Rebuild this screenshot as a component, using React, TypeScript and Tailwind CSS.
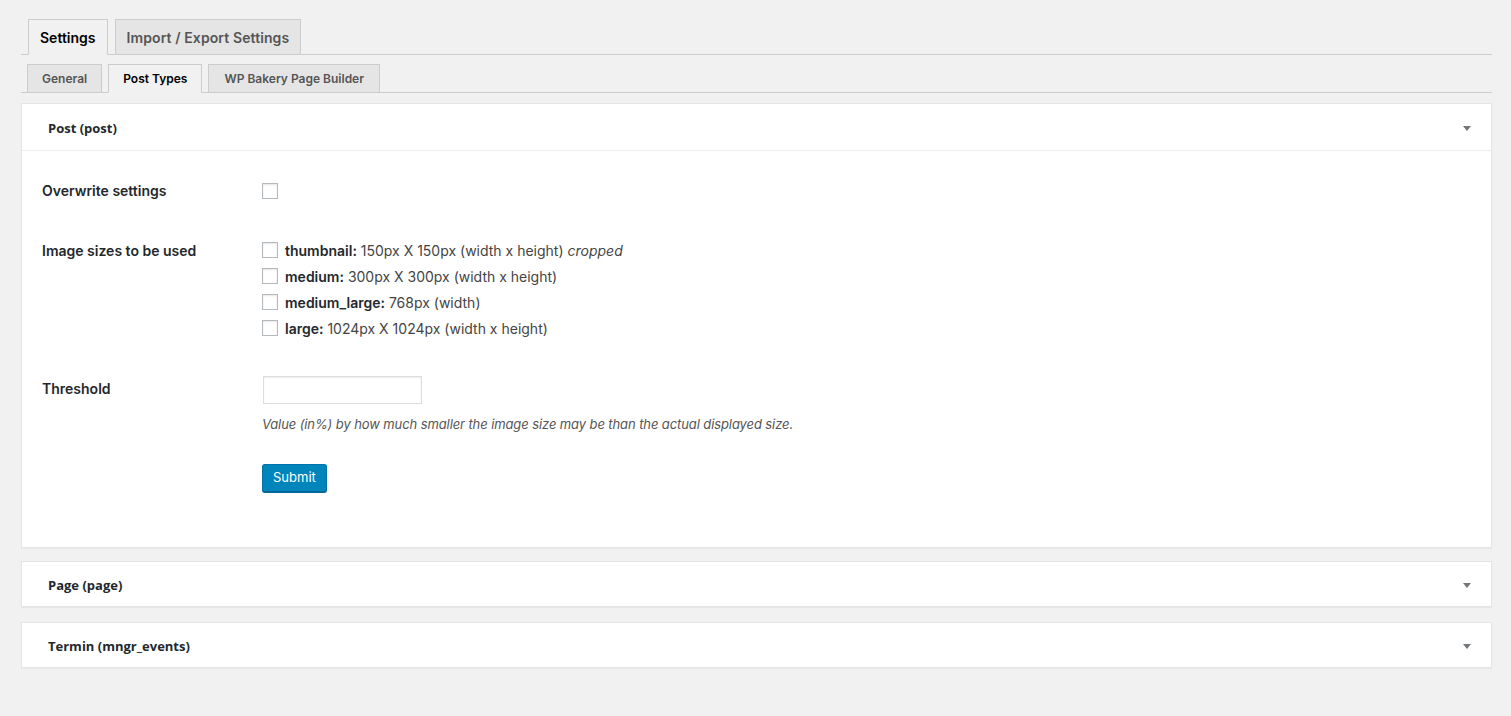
import React from 'react';

const sans = "font-['Inter','Liberation_Sans',sans-serif]";
const head = "font-['Open_Sans','Liberation_Sans',sans-serif]";

function Arrow() {
  return (
    <svg width="10" height="8" viewBox="0 0 10 8" className="text-[#72777c]">
      <path d="M1 1h8L5 6z" fill="currentColor" />
    </svg>
  );
}

function Checkbox() {
  return (
    <span className="inline-block w-4 h-4 shrink-0 bg-white border border-[#b4b9be] shadow-[inset_0_1px_2px_rgba(0,0,0,0.1)]" />
  );
}

function PanelHeader({ title, border }: { title: string; border?: boolean }) {
  return (
    <div
      className={`flex items-center justify-between pt-[4px] pl-[26px] pr-[19px] ${
        border ? 'h-[47px] border-b border-[#eeeeee]' : 'h-[44px]'
      }`}
    >
      <span className={`${head} text-[13px] font-bold text-[#23282d]`}>{title}</span>
      <Arrow />
    </div>
  );
}

const sizes = [
  { name: 'thumbnail:', desc: '150px X 150px (width x height)', extra: 'cropped' },
  { name: 'medium:', desc: '300px X 300px (width x height)' },
  { name: 'medium_large:', desc: '768px (width)' },
  { name: 'large:', desc: '1024px X 1024px (width x height)' },
];

export default function App() {
  return (
    <div className={`min-h-[716px] bg-[#f1f1f1] pt-[19px] pl-[21px] pr-[19px] ${sans}`}>
      {/* main tabs */}
      <div className="flex border-b border-[#cccccc] pl-[7px] gap-[7px]">
        <div className="-mb-px h-[36px] px-[11px] flex items-center border border-[#cccccc] border-b-[#f1f1f1] bg-[#f1f1f1] text-[14px] font-semibold text-black">
          Settings
        </div>
        <div className="h-[35px] px-[11px] flex items-center border border-[#cccccc] border-b-0 bg-[#e5e5e5] text-[14px] font-semibold text-[#555555] tracking-[0.1px]">
          Import / Export Settings
        </div>
      </div>

      {/* sub tabs */}
      <div className="mt-[9px] flex border-b border-[#cccccc] pl-[6px] gap-[6px]">
        <div className="h-[28px] px-[14px] flex items-center border border-[#cccccc] border-b-0 bg-[#e5e5e5] text-[12px] font-semibold text-[#555555]">
          General
        </div>
        <div className="-mb-px h-[29px] px-[14px] flex items-center border border-[#cccccc] border-b-[#f1f1f1] bg-[#f1f1f1] text-[12px] font-semibold text-black">
          Post Types
        </div>
        <div className="h-[28px] px-[15px] flex items-center border border-[#cccccc] border-b-0 bg-[#e5e5e5] text-[12px] font-semibold text-[#555555]">
          WP Bakery Page Builder
        </div>
      </div>

      {/* post panel */}
      <div className="mt-[10px] bg-white border border-[#e5e5e5] shadow-[0_1px_1px_rgba(0,0,0,0.04)]">
        <PanelHeader title="Post (post)" border />
        <div className="pl-[20px] pt-[30px] pb-[55px]">
          <div className="flex">
            <div className="w-[220px] leading-5 text-[14px] font-semibold text-[#23282d]">Overwrite settings</div>
            <div className="h-5 flex items-center">
              <Checkbox />
            </div>
          </div>

          <div className="flex mt-[36px]">
            <div className="w-[220px] pt-[4px] leading-5 text-[14px] font-semibold text-[#23282d]">
              Image sizes to be used
            </div>
            <div className="flex flex-col">
              {sizes.map((s) => (
                <div key={s.name} className="h-[26px] flex items-center gap-[7px] text-[14px] text-[#444444]">
                  <Checkbox />
                  <span>
                    <span className="font-semibold text-[#23282d]">{s.name}</span> {s.desc}
                    {s.extra && <em> {s.extra}</em>}
                  </span>
                </div>
              ))}
            </div>
          </div>

          <div className="flex mt-[35px]">
            <div className="w-[220px] pt-[3px] leading-5 text-[14px] font-semibold text-[#23282d]">Threshold</div>
            <div className="flex flex-col items-start">
              <input
                type="text"
                className="ml-px w-[159px] h-[28px] border border-[#dddddd] bg-white shadow-[inset_0_1px_2px_rgba(0,0,0,0.07)] outline-none"
              />
              <p className="mt-[11px] text-[13px] italic text-[#555555] leading-[18px] tracking-[-0.1px]">
                Value (in%) by how much smaller the image size may be than the actual displayed size.
              </p>
              <button className="mt-[31px] h-[28px] px-[10px] rounded-[3px] bg-[#0085ba] border border-[#0073aa] border-b-[#006799] shadow-[0_1px_0_#006799] text-[13px] text-white">
                Submit
              </button>
            </div>
          </div>
        </div>
      </div>

      <div className="mt-[13px] bg-white border border-[#e5e5e5] shadow-[0_1px_1px_rgba(0,0,0,0.04)]">
        <PanelHeader title="Page (page)" />
      </div>
      <div className="mt-[15px] bg-white border border-[#e5e5e5] shadow-[0_1px_1px_rgba(0,0,0,0.04)]">
        <PanelHeader title="Termin (mngr_events)" />
      </div>
    </div>
  );
}
